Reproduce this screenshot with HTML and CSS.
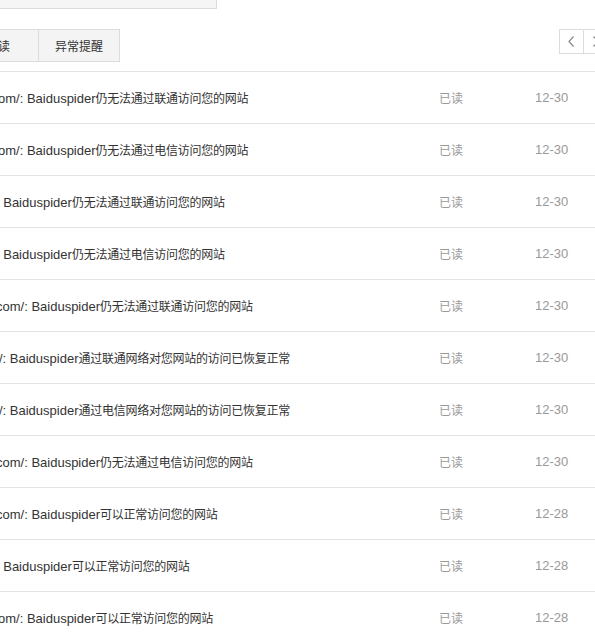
FILE: index.html
```html
<!DOCTYPE html>
<html lang="zh-CN">
<head>
<meta charset="utf-8">
<title>消息列表</title>
<link rel="stylesheet" href="styles.css">
</head>
<body>
<div class="page">
  <div class="topbox"></div>
  <div class="toolbar">
    <div class="tabs">
      <a class="tab">未读</a>
      <a class="tab">异常提醒</a>
    </div>
    <div class="pager">
      <button class="pg"><svg width="9" height="11" viewBox="0 0 9 11"><polyline points="6.5,0.5 2,5.5 6.5,10.5" fill="none" stroke="#888" stroke-width="1.2"/></svg></button>
      <button class="pg"><svg width="9" height="11" viewBox="0 0 9 11"><polyline points="2.5,0.5 7,5.5 2.5,10.5" fill="none" stroke="#888" stroke-width="1.2"/></svg></button>
    </div>
  </div>
  <ul class="list">
    <li class="row"><span class="title cut-om">om/: Baiduspider<span class="zh">仍无法通过联通访问您的网站</span></span><span class="status">已读</span><span class="date">12-30</span></li>
    <li class="row"><span class="title cut-om">om/: Baiduspider<span class="zh">仍无法通过电信访问您的网站</span></span><span class="status">已读</span><span class="date">12-30</span></li>
    <li class="row"><span class="title cut-colon">: Baiduspider<span class="zh">仍无法通过联通访问您的网站</span></span><span class="status">已读</span><span class="date">12-30</span></li>
    <li class="row"><span class="title cut-colon">: Baiduspider<span class="zh">仍无法通过电信访问您的网站</span></span><span class="status">已读</span><span class="date">12-30</span></li>
    <li class="row"><span class="title cut-com">com/: Baiduspider<span class="zh">仍无法通过联通访问您的网站</span></span><span class="status">已读</span><span class="date">12-30</span></li>
    <li class="row"><span class="title cut-slash">/: Baiduspider<span class="zh">通过联通网络对您网站的访问已恢复正常</span></span><span class="status">已读</span><span class="date">12-30</span></li>
    <li class="row"><span class="title cut-slash">/: Baiduspider<span class="zh">通过电信网络对您网站的访问已恢复正常</span></span><span class="status">已读</span><span class="date">12-30</span></li>
    <li class="row"><span class="title cut-com">com/: Baiduspider<span class="zh">仍无法通过电信访问您的网站</span></span><span class="status">已读</span><span class="date">12-30</span></li>
    <li class="row"><span class="title cut-com">com/: Baiduspider<span class="zh">可以正常访问您的网站</span></span><span class="status">已读</span><span class="date">12-28</span></li>
    <li class="row"><span class="title cut-colon">: Baiduspider<span class="zh">可以正常访问您的网站</span></span><span class="status">已读</span><span class="date">12-28</span></li>
    <li class="row"><span class="title cut-om">om/: Baiduspider<span class="zh">可以正常访问您的网站</span></span><span class="status">已读</span><span class="date">12-28</span></li>
  </ul>
</div>
</body>
</html>
```

FILE: styles.css
```css
html, body {
  margin: 0;
  padding: 0;
  background: #fff;
  overflow: hidden;
}
body {
  font-family: "Liberation Sans", Arial, "Noto Sans CJK SC", sans-serif;
  font-size: 13px;
  color: #333;
}
.page {
  width: 608px;
}
.topbox {
  width: 216px;
  height: 8px;
  background: #f5f5f5;
  border-right: 1px solid #dcdcdc;
  border-bottom: 1px solid #dcdcdc;
}
.toolbar {
  display: flex;
  align-items: flex-start;
  margin-top: 20px;
  margin-bottom: 9px;
}
.tabs {
  display: flex;
  margin-left: -43px;
  border: 1px solid #dcdcdc;
  border-right: none;
  background: #f4f4f4;
}
.tab {
  width: 80px;
  height: 31px;
  line-height: 31px;
  text-align: center;
  border-right: 1px solid #dcdcdc;
  font-family: "Noto Sans CJK SC", sans-serif;
  font-size: 12px;
  color: #333;
}
.pager {
  display: flex;
  margin-left: auto;
  border-right: 1px solid #dcdcdc;
}
.pg {
  width: 24px;
  height: 25px;
  padding: 0;
  margin: 0;
  border: 1px solid #dcdcdc;
  border-right: none;
  background: #fff;
  display: flex;
  align-items: center;
  justify-content: center;
}
.list {
  list-style: none;
  margin: 0;
  padding: 0;
  border-top: 1px solid #e3e3e3;
}
.row {
  display: grid;
  grid-template-columns: 439px 96px 1fr;
  align-items: center;
  height: 51px;
  border-bottom: 1px solid #e3e3e3;
  padding-bottom: 1px;
  box-sizing: border-box;
  height: 52px;
}
.title {
  white-space: nowrap;
  color: #333;
}
.zh {
  font-family: "Noto Sans CJK SC", sans-serif;
  font-size: 12px;
  letter-spacing: -0.25px;
}
.cut-om { margin-left: -2px; }
.cut-com { margin-left: -4px; }
.cut-slash { margin-left: -1px; }
.cut-colon { margin-left: -4px; }
.status {
  font-family: "Noto Sans CJK SC", sans-serif;
  font-size: 12px;
  color: #999;
}
.date {
  color: #999;
}
```
